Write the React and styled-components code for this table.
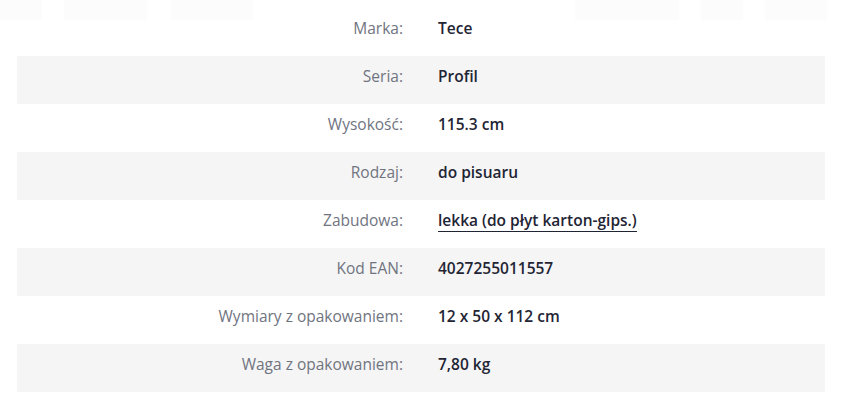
import styled, { createGlobalStyle } from 'styled-components';

const GlobalStyle = createGlobalStyle`
  html, body {
    margin: 0;
    padding: 0;
    background: #fff;
  }
  body {
    font-family: "Open Sans", "Noto Sans", sans-serif;
  }
`

const Page = styled.div`
  width: 849px;
  height: 394px;
  overflow: hidden;
  background: #fff;
`

const FadedStrip = styled.div`
  display: flex;
  height: 20px;
  margin-bottom: -12px;
`

const FadedBlock = styled.div`
  width: ${(p) => p.$w}px;
  margin-left: ${(p) => p.$gap || 0}px;
  background: #fcfcfc;
`

const Table = styled.div`
  margin: 0 24px 0 17px;
  display: flex;
  flex-direction: column;
`

const Row = styled.div`
  display: grid;
  grid-template-columns: 1fr 1fr;
  height: 48px;
  box-sizing: border-box;
  padding: 8px 0 16px;
  background: ${(p) => (p.$striped ? '#f5f5f5' : 'transparent')};
`

const Label = styled.div`
  text-align: right;
  padding-right: 18px;
  font-size: 15.5px;
  line-height: 24px;
  color: #70747f;
`

const Value = styled.div`
  padding-left: 17px;
  font-size: 15.5px;
  line-height: 24px;
  font-weight: 600;
  color: #1f2534;
`

const LinkValue = styled.span`
  display: inline-block;
  line-height: 22px;
  border-bottom: 1px solid #1f2534;
`

const specs = [
  ['Marka:', 'Tece'],
  ['Seria:', 'Profil'],
  ['Wysokość:', '115.3 cm'],
  ['Rodzaj:', 'do pisuaru'],
  ['Zabudowa:', 'lekka (do płyt karton-gips.)', true],
  ['Kod EAN:', '4027255011557'],
  ['Wymiary z opakowaniem:', '12 x 50 x 112 cm'],
  ['Waga z opakowaniem:', '7,80 kg'],
]

const faded = [
  [42, 0], [62, 22], [21, 0], [19, 24], [42, 0], [21, 0],
  [20, 322], [42, 0], [42, 0], [42, 22], [20, 22], [21, 0], [21, 0],
]

function App() {
  return (
    <Page>
      <GlobalStyle />
      <FadedStrip>
        {faded.map(([w, gap], i) => (
          <FadedBlock key={i} $w={w} $gap={gap} />
        ))}
      </FadedStrip>
      <Table>
        {specs.map(([label, value, link], i) => (
          <Row key={label} $striped={i % 2 === 1}>
            <Label>{label}</Label>
            <Value>{link ? <LinkValue>{value}</LinkValue> : value}</Value>
          </Row>
        ))}
      </Table>
    </Page>
  );
}

export default App;
